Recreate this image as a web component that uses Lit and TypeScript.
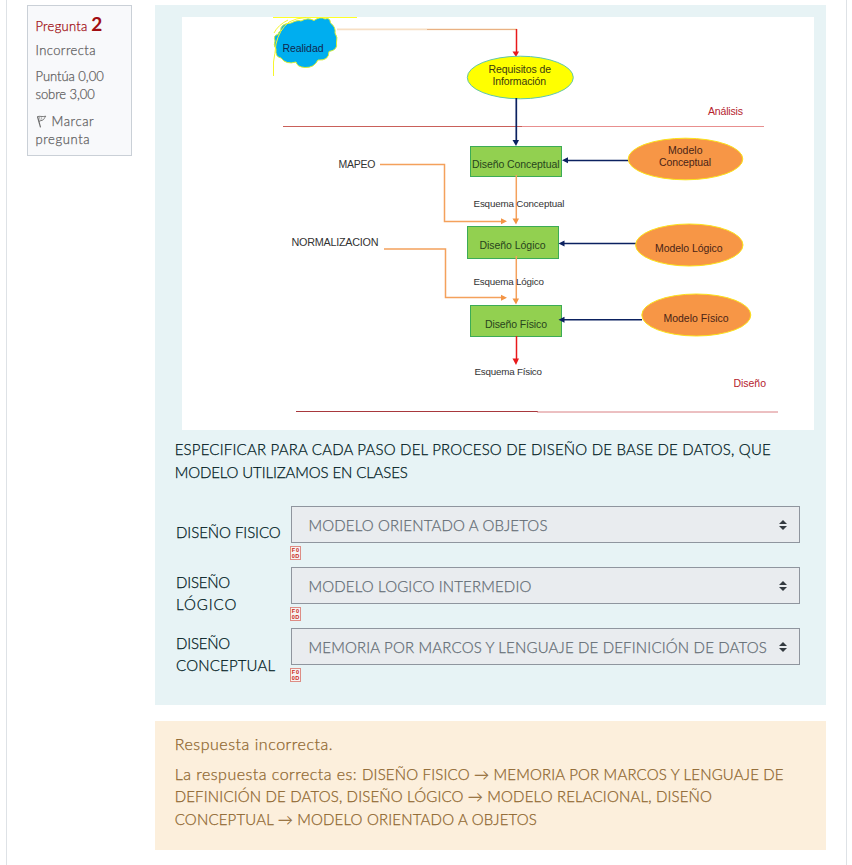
import { LitElement, html, css, svg } from "lit";
import { customElement, property } from "lit/decorators.js";
import { styleMap } from "lit/directives/style-map.js";

interface Run { text: string; tracking: number; size?: number }

const run = (text: string, tracking: number, size?: number): Run => ({ text, tracking, size });

const renderRun = (r: Run) =>
  html`<span style=${styleMap({ letterSpacing: `${r.tracking}px`, fontSize: r.size ? `${r.size}px` : undefined })}>${r.text}</span>`;
const renderLine = (runs: Run[]) => html`<span class="line">${runs.map(renderRun)}</span>`;

const PROMPT: Run[][] = [
  [run("ESPECIFICAR PARA CADA PASO DEL PROCESO DE DISEÑO DE BASE DE DATOS, QUE", 0.2)],
  [run("MODELO UTILIZAMOS EN CLASES", -0.12)],
];

const ANSWERS: { label: Run[][]; value: Run }[] = [
  { label: [[run("DISEÑO FISICO", -0.06)]], value: run("MODELO ORIENTADO A OBJETOS", 0.15) },
  { label: [[run("DISEÑO", -0.2)], [run("LÓGICO", 0.95)]], value: run("MODELO LOGICO INTERMEDIO", 0.15) },
  { label: [[run("DISEÑO", -0.2)], [run("CONCEPTUAL", 0.18)]], value: run("MEMORIA POR MARCOS Y LENGUAJE DE DEFINICIÓN DE DATOS", 0.17) },
];

const CORRECT: Run[][] = [
  [run("La respuesta correcta es: ", 0.48, 16), run("DISEÑO FISICO → MEMORIA POR MARCOS Y LENGUAJE DE", 0.18)],
  [run("DEFINICIÓN DE DATOS, DISEÑO LÓGICO → MODELO RELACIONAL, DISEÑO", 0.165)],
  [run("CONCEPTUAL → MODELO ORIENTADO A OBJETOS", 0.18)],
];

const shared = css`
  :host { display: block; }
  .line { display: block; white-space: pre; }
`;

@customElement("question-info")
class QuestionInfo extends LitElement {
  static styles = [shared, css`
    :host {
      box-sizing: border-box; width: 105px; height: 151px; padding: 8px 7px 0 7.5px;
      border: 1px solid #cad0d7; background: #f8f9fb;
      font-size: 13px; line-height: 18px; color: #5f6061;
    }
    .number { color: #a10d12; line-height: 20px; margin-bottom: 5px; letter-spacing: .25px; white-space: nowrap; }
    .number b { font-size: 19px; font-weight: 700; line-height: 20px; -webkit-text-stroke: 0; }
    .state { letter-spacing: .42px; margin-bottom: 8px; height: 17.5px; }
    .grade { margin-bottom: 9px; }
    .flag { width: 11px; height: 13px; vertical-align: -2px; margin-right: 5px; }
  `];
  render() {
    return html`
      <div class="number">Pregunta <b>2</b></div>
      <div class="state">Incorrecta</div>
      <div class="grade">${renderLine([run("Puntúa 0,00", -0.03)])}${renderLine([run("sobre 3,00", -0.08)])}</div>
      <div>
        <span class="line"><svg class="flag" viewBox="0 0 11 13" fill="none" stroke="#6b6b6b">
          <path d="M1.5 1.5L4.5 12.3" stroke-width="1.2"/>
          <path d="M1.3 1.8C3.5.4 6 2.4 9.8 1.2C8.2 3 8.3 4.4 6.6 5.2C5 5.8 4 5.6 2.8 6.5" stroke-width=".9"/>
          <path d="M3.3 2L4.3 5.6M5.2 2.2L6 4.8" stroke-width=".5"/>
        </svg>${renderRun(run("Marcar", 0.6))}</span>
        ${renderLine([run("pregunta", 0.6)])}
      </div>`;
  }
}

const label = (x: number, y: number, w: number, text: string, size = 10.5, fill = "#333") =>
  svg`<text x=${x} y=${y} textLength=${w} font-size=${size} fill=${fill}>${text}</text>`;

@customElement("design-diagram")
class DesignDiagram extends LitElement {
  static styles = css`
    :host { display: block; width: 632px; height: 413px; background: #fff; -webkit-text-stroke: 0; }
    svg { display: block; width: 632px; height: 413px; font-family: "Liberation Sans", Arial, sans-serif; font-weight: 400; }
  `;
  render() {
    return html`<svg viewBox="182 17 632 413" fill="none">
      <path d="M337 29.300H517" stroke="#f7dfc4" stroke-width="1.800"/>
      <path d="M427 29.500H517" stroke="#e9b183"/>
      <path d="M280.500 31Q280 23.500 291 23Q298 19.500 301 21Q308 17 314 20.500Q320 16 325 19Q330 17 330.500 23Q336 27 335 33Q338 37 336.500 43Q338 50 329 51.500Q329 61 318 60Q314 68 305 67.500Q297 67 296 62Q286 65 281 58Q275 57 276 49Q273 45 275 41Q273 35 278 34.500Q278 32 280.500 31Z" fill="#00aeef" stroke="#d8ee32"/>
      <path d="M273 17.500H357" stroke="#ffff28" stroke-width="1.200"/>
      <path d="M273.500 76V62Q275 54 276 44Q279 30 289 22Q296 18 306 17.500M274 33Q278 25 288 20" stroke="#f6f62c"/>
      ${label(282.5, 51.5, 41, "Realidad", 10.5, "#10284e")}

      <path d="M522 126.500H764" stroke="#e88f8f"/>
      <path d="M283 126.500H522" stroke="#c9605a"/>
      <path d="M296 411.500H538" stroke="#a8383d" stroke-width="1.100"/>
      <path d="M537 412H778" stroke="#d98084"/>

      <path d="M516.500 29V52" stroke="#e8191b" stroke-width="1.500"/>
      <path d="M512.500 51.500H519L516 57Z" fill="#e8191b"/>
      <ellipse cx="520.300" cy="77.500" rx="53" ry="21.300" fill="#ff0" stroke="#5fc6ae"/>
      ${label(488.5, 73, 62.5, "Requisitos de", 10.5, "#3b3a10")}
      ${label(492.5, 85, 53.5, "Información", 10.5, "#3b3a10")}
      <path d="M516.300 98V142" stroke="#0b2160" stroke-width="1.700"/>
      <path d="M512.500 140H519L516 146Z" fill="#0b2160"/>

      <g fill="#92d050" stroke="#3cab56">
        <rect x="470.500" y="146.500" width="91" height="30"/>
        <rect x="467.500" y="226.500" width="91" height="32"/>
        <rect x="470.500" y="305.500" width="91" height="31"/>
      </g>
      ${label(472, 168, 87.5, "Diseño Conceptual", 10.5, "#28441c")}
      ${label(479.5, 248.5, 66, "Diseño Lógico", 10.5, "#28441c")}
      ${label(485, 328, 62, "Diseño Físico", 10.5, "#28441c")}

      <path d="M516.300 175V220M516.300 256V300M380 164.500H444.500V221.500H502M384 249H445.500V297.500H502" stroke="#f4a15c" stroke-width="1.500"/>
      <path d="M512.500 218.500H519L516 224.500ZM512.500 298.500H519L516 304.500ZM501 218.300V224.300L507 221.300ZM501 294.700V300.700L507 297.700Z" fill="#f39445"/>
      <path d="M516.500 336V360" stroke="#e8191b" stroke-width="1.500"/>
      <path d="M512.500 358.500H519L516 365Z" fill="#e8191b"/>

      <path d="M567 160.500H629M564 243.500H636M563 319.700H642" stroke="#0b2160" stroke-width="1.600"/>
      <path d="M562 160.300L568 157.300V163.300ZM558.500 243.500L564.500 240.500V246.500ZM558.500 319.700L564.500 316.700V322.700Z" fill="#0b2160"/>

      <g fill="#f79646" stroke="#fbe219">
        <ellipse cx="685.500" cy="159" rx="57.300" ry="20.800"/>
        <ellipse cx="689.300" cy="245" rx="53.700" ry="21"/>
        <ellipse cx="696.300" cy="315" rx="54.500" ry="21"/>
      </g>
      ${label(668, 154, 34.5, "Modelo", 10.5, "#4a2416")}
      ${label(659, 166, 52, "Conceptual", 10.5, "#4a2416")}
      ${label(655, 252, 67.5, "Modelo Lógico", 10.5, "#4a2416")}
      ${label(663.5, 322, 65, "Modelo Físico", 10.5, "#4a2416")}

      ${label(338.5, 168, 37, "MAPEO", 10.5)}
      ${label(291.5, 246, 87, "NORMALIZACION", 10.8)}
      ${label(473.5, 207, 91, "Esquema Conceptual", 9.8)}
      ${label(473.5, 285, 70.5, "Esquema Lógico", 9.8)}
      ${label(474.5, 375, 67.5, "Esquema Físico", 9.8)}
      ${label(708, 115, 35, "Análisis", 10.5, "#b5222d")}
      ${label(733.5, 387, 32.5, "Diseño", 10.5, "#b5222d")}
    </svg>`;
  }
}

@customElement("answer-row")
class AnswerRow extends LitElement {
  @property({ attribute: false }) label: Run[][] = [];
  @property({ attribute: false }) value!: Run;
  static styles = [shared, css`
    :host { display: grid; grid-template-columns: 115px 509px; height: 61px; align-items: start; }
    .label { height: 52px; line-height: 22px; display: flex; flex-direction: column; justify-content: center; }
    .select {
      box-sizing: border-box; height: 37px; border: 1px solid #8f959e; background: #e9ecef;
      padding: 0 12px 0 16.500px; display: flex; align-items: center; justify-content: space-between;
      color: #646d75; line-height: 36px; white-space: nowrap;
    }
    .caret { width: 8px; height: 10px; fill: #343a40; flex: none; }
    .glyph { display: block; width: 11px; height: 14px; margin: 3px 0 0 -1px; -webkit-text-stroke: 0; }
  `];
  render() {
    return html`
      <div class="label">${this.label.map(renderLine)}</div>
      <div>
        <div class="select">
          ${renderRun(this.value)}
          <svg class="caret" viewBox="0 0 8 10"><path d="M4 0L8 4H0ZM4 10L0 6H8Z"/></svg>
        </div>
        <svg class="glyph" viewBox="0 0 11 14" font-family="Liberation Sans" font-weight="700" font-size="5.600" fill="#c8281c">
          <rect x=".5" y=".5" width="10" height="13" fill="#f8f3f1" stroke="#dd8d85"/>
          <text x="1.800" y="6" textLength="7.400">F0</text>
          <text x="1.800" y="12.400" textLength="7.400">0D</text>
        </svg>
      </div>`;
  }
}

@customElement("app-root")
class AppRoot extends LitElement {
  static styles = [shared, css`
    :host {
      box-sizing: border-box; height: 865px; overflow: hidden; background: #fff; padding-left: 6px;
      font: 300 15px/22.500px Lato, "Liberation Sans", sans-serif; -webkit-text-stroke: .25px;
    }
    .card {
      box-sizing: border-box; width: 841px; height: 865px; padding: 5px 20px 0;
      border: solid #dee2e6; border-width: 0 1px; display: flex; gap: 23px;
      align-items: flex-start;
    }
    .content { width: 671px; display: flex; flex-direction: column; gap: 16px; }
    .question { box-sizing: border-box; height: 700px; background: #e7f3f5; color: #001a1e; padding: 12px 19px 0; }
    .diagram { margin-left: 8px; }
    .prompt { margin: 8px 0 23px .7px; }
    .answers { padding-left: 2px; }
    .feedback { box-sizing: border-box; height: 129px; padding: 12px 19px 0 19.700px; background: #fcefdc; color: #8e662e; }
    .verdict { margin-bottom: 7px; }
  `];
  render() {
    return html`
      <div class="card">
        <question-info></question-info>
        <div class="content">
          <section class="question">
            <design-diagram class="diagram"></design-diagram>
            <div class="prompt">${PROMPT.map(renderLine)}</div>
            <div class="answers">
              ${ANSWERS.map(a => html`<answer-row .label=${a.label} .value=${a.value}></answer-row>`)}
            </div>
          </section>
          <section class="feedback">
            <div class="verdict">${renderLine([run("Respuesta incorrecta.", 0.54, 16)])}</div>
            ${CORRECT.map(renderLine)}
          </section>
        </div>
      </div>`;
  }
}
